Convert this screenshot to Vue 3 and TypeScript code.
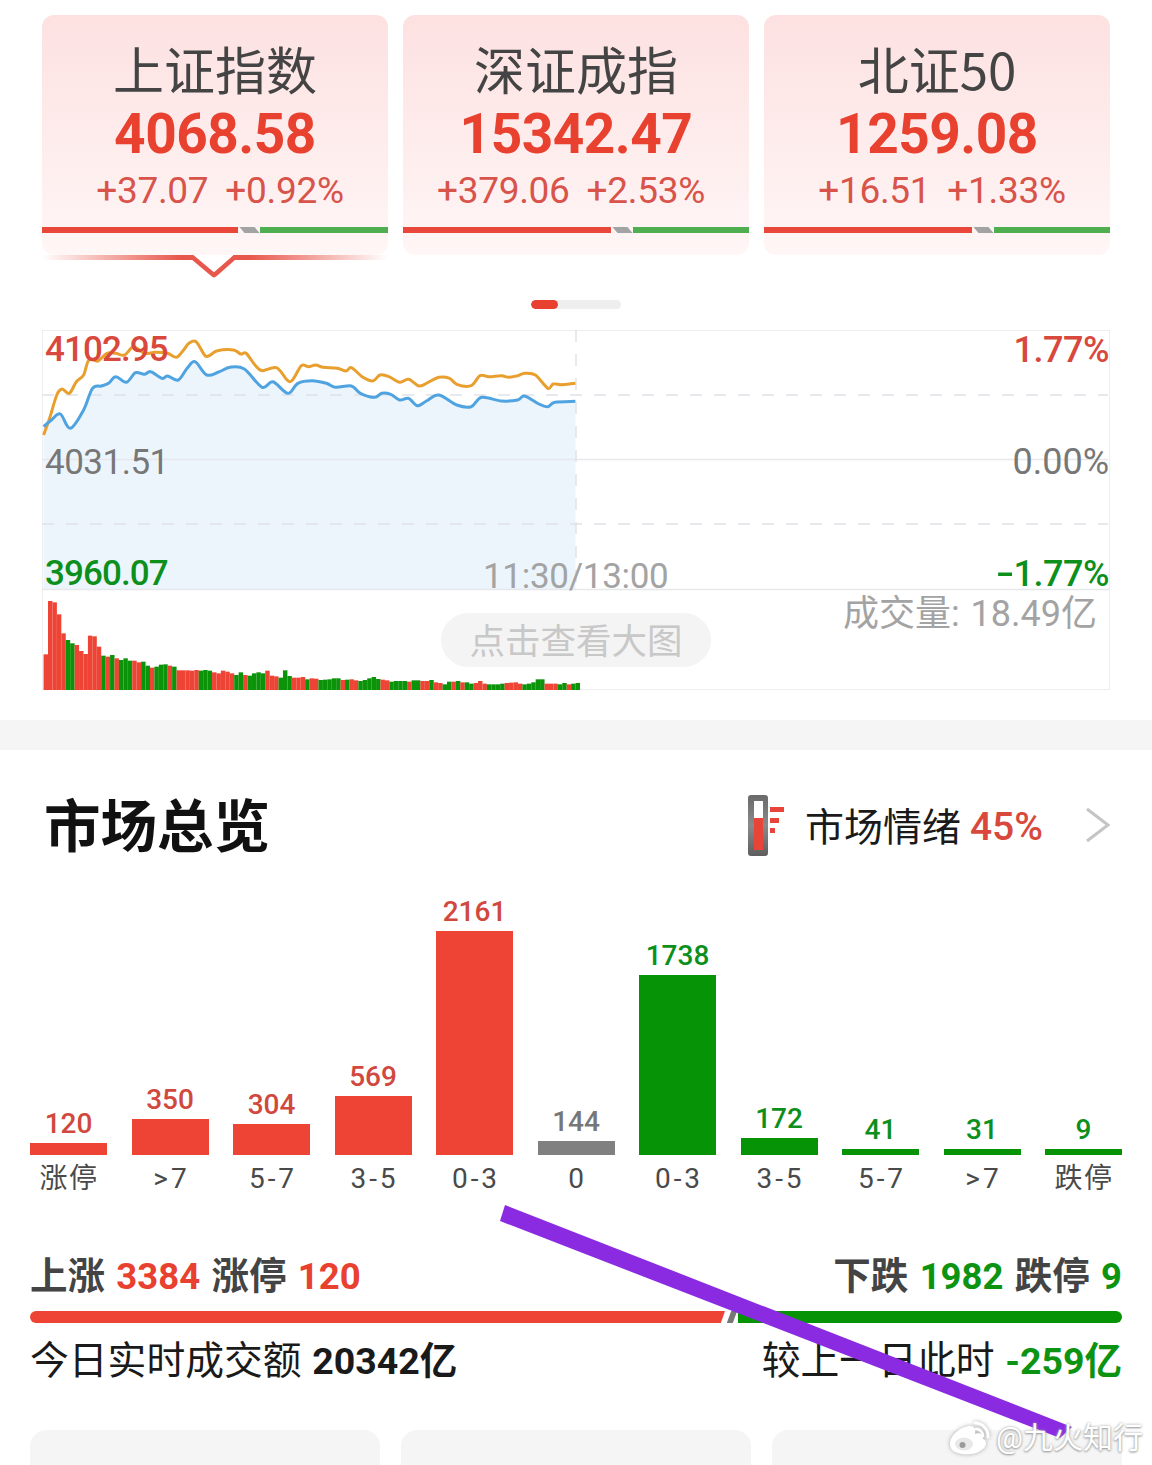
<script setup lang="ts">
interface Idx { name: string; val: string; d1: string; d2: string; red: number; shift: number; active?: boolean }
const indices: Idx[] = [
  { name: '上证指数', val: '4068.58', d1: '+37.07', d2: '+0.92%', red: 196, shift: 10, active: true },
  { name: '深证成指', val: '15342.47', d1: '+379.06', d2: '+2.53%', red: 208, shift: -10 },
  { name: '北证50', val: '1259.08', d1: '+16.51', d2: '+1.33%', red: 208, shift: 10 }
]
const ox = (z: number) => 30 + z / 2.8 - 42
const oy = (z: number) => 325 + z / 3 - 330
const toPts = (a: number[]) => {
  const out: [number, number][] = []
  for (let i = 0; i < a.length; i += 2) out.push([ox(a[i]), oy(a[i + 1])])
  return out
}
// Catmull-Rom smoothing, so the lines curve as in the source
const smooth = (p: [number, number][]) => {
  let d = `M${p[0][0].toFixed(1)} ${p[0][1].toFixed(1)}`
  for (let i = 0; i < p.length - 1; i++) {
    const a = p[Math.max(i - 1, 0)]
    const b = p[i]
    const c = p[i + 1]
    const e = p[Math.min(i + 2, p.length - 1)]
    const c1x = b[0] + (c[0] - a[0]) / 6
    const c1y = b[1] + (c[1] - a[1]) / 6
    const c2x = c[0] - (e[0] - b[0]) / 6
    const c2y = c[1] - (e[1] - b[1]) / 6
    d += ` C${c1x.toFixed(1)} ${c1y.toFixed(1)} ${c2x.toFixed(1)} ${c2y.toFixed(1)} ${c[0].toFixed(1)} ${c[1].toFixed(1)}`
  }
  return d
}
const orangeZ = [38,330,55,280,75,210,90,192,110,205,130,170,150,150,165,105,190,108,215,85,240,85,265,90,290,65,320,85,350,82,385,85,410,97,430,75,445,55,465,50,490,92,505,90,525,77,570,75,590,87,605,85,630,120,650,137,690,128,720,165,735,165,760,122,780,125,800,120,820,127,860,130,885,138,900,128,930,155,960,168,980,150,1005,155,1035,172,1060,163,1090,183,1115,172,1145,157,1175,160,1195,178,1235,182,1260,152,1285,155,1320,152,1340,157,1365,152,1385,145,1415,150,1450,190,1465,177,1490,179,1527,175]
const blueZ = [38,305,60,285,85,267,113,310,150,255,175,190,200,183,220,175,240,155,270,172,295,143,320,148,338,140,370,160,385,153,415,165,440,130,462,110,495,150,530,140,560,127,600,132,650,187,680,170,722,205,750,175,790,167,830,175,855,187,900,183,925,205,965,217,985,205,1010,208,1035,225,1060,220,1085,242,1110,228,1145,210,1195,240,1235,245,1265,217,1320,228,1365,225,1385,213,1425,237,1450,245,1470,232,1527,229]
const orange = smooth(toPts(orangeZ))
const blue = smooth(toPts(blueZ))
const area = `${blue} L${ox(1527).toFixed(1)} 259 L${ox(38).toFixed(1)} 259 Z`

// top of each volume bar in zoom coords; r = red, g = green
const volRaw = 'r988 r828 r832 r868 r925 g945 g955 r960 r978 r987 r932 r934 r965 g992 r995 g990 r1000 g1005 g1000 g1007 r1007 r1012 g1010 g1022 r1028 g1025 g1019 g1018 r1022 g1025 r1036 r1036 r1036 r1037 r1035 g1037 g1035 g1037 r1042 r1045 r1037 r1040 r1045 g1050 g1042 r1050 g1052 g1045 g1042 g1045 r1037 r1052 r1054 g1058 g1036 g1053 r1058 r1058 r1056 g1063 r1060 r1061 g1065 g1064 g1063 g1060 g1060 r1065 g1064 r1063 r1066 g1068 g1065 g1060 g1056 g1062 r1064 r1066 g1070 g1068 g1068 g1068 r1070 g1066 g1066 r1068 r1068 g1065 r1072 r1074 g1078 g1070 r1070 g1068 r1072 g1072 g1076 r1074 r1068 r1076 g1078 g1078 g1078 g1076 r1074 r1073 r1072 r1076 g1078 g1076 g1072 g1063 g1063 r1076 r1076 r1076 g1078 g1074 r1078 g1076 g1074'
const volItems = volRaw.split(' ')
const step = 1502 / volItems.length
const vols = volItems.map((s, i) => {
  const top = parseInt(s.slice(1), 10)
  return {
    x: ox(38 + i * step),
    y: oy(top),
    h: (1095 - top) / 3,
    c: s[0] === 'r' ? '#ee4435' : '#0b9309'
  }
})

interface Bar { v: string; l: string; h: number; c: string; zh?: boolean }
const R = 'up', G = 'down', N = 'flat'
const bars: Bar[] = [
  { v: '120', l: '涨停', h: 12, c: R, zh: true },
  { v: '350', l: '>7', h: 36, c: R },
  { v: '304', l: '5-7', h: 31, c: R },
  { v: '569', l: '3-5', h: 59, c: R },
  { v: '2161', l: '0-3', h: 224, c: R },
  { v: '144', l: '0', h: 14, c: N },
  { v: '1738', l: '0-3', h: 180, c: G },
  { v: '172', l: '3-5', h: 17, c: G },
  { v: '41', l: '5-7', h: 6, c: G },
  { v: '31', l: '>7', h: 6, c: G },
  { v: '9', l: '跌停', h: 6, c: G, zh: true }
]
</script>

<template>
  <div class="page">
    <div class="tabs">
      <div v-for="it in indices" :key="it.name" class="tab" :class="{ active: it.active }">
        <div class="tab-name">{{ it.name }}</div>
        <div class="tab-val">{{ it.val }}</div>
        <div class="tab-delta" :style="{ marginLeft: it.shift + 'px' }"><span>{{ it.d1 }}</span><span>{{ it.d2 }}</span></div>
        <div class="tab-split">
          <i class="s-red" :style="{ width: it.red + 'px' }"></i>
          <i class="s-gray"></i>
          <i class="s-green"></i>
        </div>
        <div v-if="it.active" class="tab-indicator">
          <svg width="346" height="24" viewBox="0 0 346 24">
            <defs>
              <linearGradient id="ind" x1="0" x2="1" y1="0" y2="0">
                <stop offset="0" stop-color="#e8574c" stop-opacity="0" />
                <stop offset="0.4" stop-color="#e8574c" />
                <stop offset="0.6" stop-color="#e8574c" />
                <stop offset="1" stop-color="#e8574c" stop-opacity="0" />
              </linearGradient>
            </defs>
            <rect x="0" y="0" width="346" height="5" fill="url(#ind)" />
            <path d="M150 0 L171 19 Q172 20 173 19 L192 0 Z" fill="#fff" />
            <path d="M149 1 L171 19.5 Q172 20.5 173 19.5 L194 1" fill="none" stroke="#e8574c" stroke-width="4.5" />
          </svg>
        </div>
      </div>
    </div>

    <div class="pager"><i></i></div>

    <div class="chart">
      <svg class="chart-svg" width="1068" height="360" viewBox="0 0 1068 360">
        <path :d="area" fill="#ecf5fc" />
        <line x1="0" x2="1066" y1="65" y2="65" class="dash" />
        <line x1="0" x2="1066" y1="129.5" y2="129.5" stroke="#e8e8ec" stroke-width="1.5" />
        <line x1="0" x2="1066" y1="194" y2="194" class="dash" />
        <line x1="0" x2="1068" y1="259.5" y2="259.5" stroke="#e6e8ec" stroke-width="1.5" />
        <line x1="534" x2="534" y1="0" y2="259" class="dash" />
        <path :d="orange" fill="none" stroke="#e89f2e" stroke-width="3" stroke-linejoin="round" />
        <path :d="blue" fill="none" stroke="#4fa3e0" stroke-width="3" stroke-linejoin="round" />
        <rect v-for="(b, i) in vols" :key="i" :x="b.x" :y="b.y" width="4.45" :height="b.h" :fill="b.c" />
      </svg>
      <span class="lbl l-tl red">4102.95</span>
      <span class="lbl l-ml gray">4031.51</span>
      <span class="lbl l-bl green">3960.07</span>
      <span class="lbl l-tr red">1.77%</span>
      <span class="lbl l-mr gray">0.00%</span>
      <span class="lbl l-br green"><span class="minus">-</span>1.77%</span>
      <span class="lbl l-time">11:30/13:00</span>
      <span class="lbl l-vol">成交量: 18.49亿</span>
      <div class="pill">点击查看大图</div>
    </div>

    <div class="band"></div>

    <div class="head">
      <h2 class="head-title">市场总览</h2>
      <div class="mood">
        <svg class="mood-icon" width="36" height="61" viewBox="0 0 36 61">
          <defs>
            <linearGradient id="th" x1="0" x2="0" y1="0" y2="1">
              <stop offset="0" stop-color="#6a6a6a" />
              <stop offset="0.5" stop-color="#8a8a8a" />
              <stop offset="1" stop-color="#5e5e5e" />
            </linearGradient>
          </defs>
          <rect x="0" y="0" width="20" height="61" rx="3" fill="url(#th)" />
          <rect x="6" y="6" width="9" height="49" fill="#fff" />
          <rect x="6" y="23" width="9" height="32" fill="#e8443a" />
          <rect x="22" y="12" width="14" height="5" fill="#e8443a" />
          <rect x="22" y="23" width="9" height="5" fill="#e8443a" />
          <rect x="22" y="33" width="5" height="5" fill="#e8443a" />
        </svg>
        <span class="mood-text">市场情绪</span>
        <span class="mood-num">45%</span>
        <svg class="mood-arrow" width="26" height="36" viewBox="0 0 26 36">
          <path d="M2 2 L23 18 L2 34" fill="none" stroke="#c4c4c4" stroke-width="3" />
        </svg>
      </div>
    </div>

    <div class="dist">
      <div v-for="(b, i) in bars" :key="i" class="col">
        <span class="col-v" :class="b.c">{{ b.v }}</span>
        <i class="col-b" :class="b.c" :style="{ height: b.h + 'px' }"></i>
        <span class="col-l" :class="{ zh: b.zh }">{{ b.l }}</span>
      </div>
    </div>

    <div class="stats">
      <div><span>上涨</span> <b class="red2">3384</b> <span>涨停</span> <b class="red2">120</b></div>
      <div><span>下跌</span> <b class="green2">1982</b> <span>跌停</span> <b class="green2">9</b></div>
    </div>

    <div class="ratio"><i class="r-red"></i><i class="r-gray"></i><i class="r-green"></i></div>

    <div class="turnover">
      <div>今日实时成交额 <b>20342亿</b></div>
      <div>较上一日此时 <b class="green2">-259亿</b></div>
    </div>

    <div class="cards"><i></i><i></i><i></i></div>

    <svg class="slash" width="1152" height="1465" viewBox="0 0 1152 1465">
      <polygon points="505,1205 1072,1427 1060,1438 500,1221" fill="#8a2be2" />
    </svg>

    <div class="mark">
      <svg width="46" height="36" viewBox="0 0 46 36">
        <path d="M3 24 C3 15 14 6 23 6 C28 6 29 10 28 14 C33 12 37 14 36 19 C40 20 40 26 36 29 C30 34 22 35 15 34 C8 33 3 30 3 24 Z" fill="#fff" />
        <ellipse cx="17" cy="24" rx="9" ry="6.5" fill="#e8e8e8" />
        <circle cx="15.5" cy="25" r="3" fill="#9a9a9a" />
        <path d="M28 3 A13 13 0 0 1 41 17" fill="none" stroke="#fff" stroke-width="3" stroke-linecap="round" />
        <path d="M29 9 A7 7 0 0 1 36 16" fill="none" stroke="#fff" stroke-width="2.5" stroke-linecap="round" />
      </svg>
      <span>@九火知行</span>
    </div>
  </div>
</template>

<style>
html, body { margin: 0; background: #fff; }
</style>

<style scoped>
.page {
  position: relative;
  width: 1152px;
  height: 1465px;
  overflow: hidden;
  background: #fff;
  font-family: Roboto, "Noto Sans CJK SC", sans-serif;
}
i { display: block; }

.tabs { display: flex; gap: 15px; padding: 15px 42px 0; height: 240px; }
.tab {
  position: relative;
  width: 346px;
  height: 240px;
  border-radius: 12px;
  background: linear-gradient(#fde1e1, #fff6f6);
  display: flex;
  flex-direction: column;
  align-items: center;
}
.tab-name { margin-top: 19px; font-size: 51px; line-height: 68px; color: #444; font-family: "Noto Sans CJK SC", sans-serif; }
.tab-val { font-size: 55px; line-height: 60px; font-weight: 700; color: #e8412f; letter-spacing: -0.5px; margin-top: 2px; }
.tab-delta { display: flex; gap: 17px; font-size: 37px; line-height: 42px; color: #d8544a; margin-top: 6px; letter-spacing: -0.3px; font-weight: 400; }
.tab-split { position: absolute; left: 0; right: 0; top: 212px; height: 6px; display: flex; }
.s-red { height: 6px; background: #e8473a; }
.s-gray { width: 15px; height: 6px; margin: 0 3px 0 4px; background: #a3a3a3; transform: skewX(40deg); }
.s-green { flex: 1; height: 6px; background: #4fae4f; }
.tab-indicator { position: absolute; left: 0; top: 240px; height: 24px; }
.tab-indicator svg { display: block; }

.pager { width: 90px; height: 9px; margin: 45px 0 0 531px; background: #eee; border-radius: 5px; overflow: hidden; }
.pager i { width: 27px; height: 9px; background: #e8412f; border-radius: 5px; }

.chart {
  position: relative;
  width: 1068px;
  height: 360px;
  margin: 21px 0 0 42px;
  box-sizing: border-box;
  outline: 1px solid #eeeef0;
  outline-offset: -1px;
}
.chart-svg { position: absolute; left: 0; top: 0; display: block; }
.dash { stroke: #dfe2e8; stroke-width: 1.5; stroke-dasharray: 12 12; }
.lbl { position: absolute; font-size: 35px; line-height: 40px; white-space: nowrap; letter-spacing: -0.5px; }
.red { color: #d8483c; font-weight: 500; }
.gray { color: #777; }
.green { color: #0d8f1c; font-weight: 500; }
.minus { display: inline-block; transform: scaleX(1.5); margin: 0 3px 0 3px; }
.l-tl { left: 3px; top: 0; letter-spacing: -0.9px; }
.l-ml { left: 3px; top: 113px; }
.l-bl { left: 3px; top: 224px; letter-spacing: -0.9px; }
.l-tr { right: 1px; top: 0; font-size: 36px; }
.l-mr { right: 1px; top: 112px; font-size: 36px; letter-spacing: 0; }
.l-br { right: 1px; top: 224px; font-size: 36px; }
.l-time { left: 441px; top: 227px; color: #a3a3a3; letter-spacing: -0.3px; }
.l-vol { right: 13px; top: 264px; color: #a3a3a3; font-size: 36px; word-spacing: 2px; letter-spacing: 0; font-weight: 400; }
.pill {
  position: absolute;
  left: 399px;
  top: 283px;
  width: 270px;
  height: 54px;
  border-radius: 27px;
  background: rgba(240, 240, 240, 0.75);
  color: #c8c8c8;
  font-size: 35.5px;
  line-height: 52px;
  text-align: center;
  font-family: "Noto Sans CJK SC", sans-serif;
}

.band { height: 30px; margin-top: 30px; background: #f5f5f5; }

.head { display: flex; align-items: center; justify-content: space-between; height: 150px; padding: 0 42px 0 44px; }
.head-title { margin: 0; font-size: 56.5px; font-weight: 700; color: #111; font-family: "Noto Sans CJK SC", sans-serif; position: relative; top: -3px; }
.mood { display: flex; align-items: center; }
.mood-icon { margin-right: 21px; }
.mood-text { font-size: 39px; line-height: 46px; color: #1a1a1a; font-family: "Noto Sans CJK SC", sans-serif; position: relative; top: -1px; }
.mood-num { font-size: 39px; line-height: 46px; color: #d8483c; margin-left: 9px; letter-spacing: 0; font-weight: 500; position: relative; top: 2px; }
.mood-arrow { margin-left: 42px; margin-right: -1px; }

.dist { display: flex; justify-content: space-between; align-items: flex-end; height: 298px; padding: 0 30px; }
.col { width: 77px; display: flex; flex-direction: column; align-items: center; }
.col-v { font-size: 28px; line-height: 32px; margin-bottom: 3px; font-weight: 500; }
.col-v.up { color: #d0483e; }
.col-v.down { color: #0d8f1c; }
.col-v.flat { color: #777; }
.col-b { width: 100%; }
.col-b.up { background: #ee4435; }
.col-b.down { background: #079306; }
.col-b.flat { background: #808080; }
.col-l { font-size: 28px; line-height: 40px; margin-top: 4px; margin-bottom: -1px; padding-left: 3px; color: #4a4a4a; letter-spacing: 3px; white-space: nowrap; }
.col-l.zh { letter-spacing: 1.5px; padding-left: 1px; }

.stats { display: flex; justify-content: space-between; padding: 0 30px; margin-top: 54px; font-size: 37.5px; line-height: 48px; font-weight: 700; color: #444; word-spacing: 2px; }
.stats b { font-weight: 700; font-size: 36.5px; }
.red2 { color: #e8412f; }
.green2 { color: #0d9312; }

.ratio { position: relative; height: 12px; margin: 10px 30px 0; border-radius: 6px; overflow: hidden; }
.r-red { position: absolute; left: 0; top: 0; width: 695px; height: 12px; background: #ee4435; clip-path: polygon(0 0, 100% 0, 99.4% 100%, 0 100%); }
.r-gray { position: absolute; left: 699px; top: 0; width: 6px; height: 12px; background: #777; transform: skewX(-20deg); }
.r-green { position: absolute; left: 708px; right: 0; top: 0; height: 12px; background: #079306; }

.turnover { display: flex; justify-content: space-between; padding: 0 30px; margin-top: 10px; font-size: 38.8px; line-height: 48px; color: #1a1a1a; font-family: "Noto Sans CJK SC", sans-serif; word-spacing: 2px; }
.turnover b { font-family: Roboto, "Noto Sans CJK SC", sans-serif; font-weight: 700; font-size: 37.5px; }

.cards { display: flex; gap: 21px; padding: 0 30px; margin-top: 45px; }
.cards i { width: 350px; height: 60px; border-radius: 16px; background: #f5f5f5; }

.slash { position: absolute; left: 0; top: 0; }
.mark { position: absolute; left: 947px; top: 1418px; display: flex; align-items: center; gap: 3px; color: #fff; font-size: 30px; line-height: 40px; text-shadow: 0 0 3px #aaa, 0 1px 2px #999; }
.mark svg { display: block; filter: drop-shadow(0 0 2px #aaa); }
</style>
